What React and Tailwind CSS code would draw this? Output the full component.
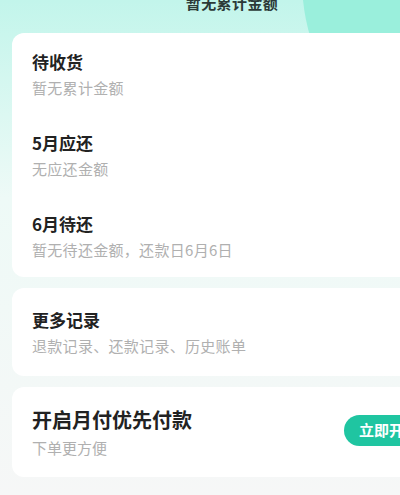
import React from 'react';

const font = { fontFamily: '"Noto Sans CJK SC", "Noto Sans", sans-serif' };

const rows = [
  { title: '待收货', sub: '暂无累计金额' },
  { title: '5月应还', sub: '无应还金额' },
  { title: '6月待还', sub: '暂无待还金额，还款日6月6日' },
];

const Row = ({ title, sub }) => (
  <div className="flex flex-col gap-1">
    <div className="text-[17px] leading-6 font-bold text-[#222]">{title}</div>
    <div className="text-[15px] leading-5 text-[#b0b0b0] tracking-[0.3px]">{sub}</div>
  </div>
);

export default function App() {
  return (
    <div
      className="relative w-[400px] h-[495px] overflow-hidden bg-gradient-to-b from-[#c2f5eb] via-[#eefaf7] via-40% to-[#f6f7f7]"
      style={font}
    >
      {/* decorative circle in the header */}
      <div className="absolute left-[302px] top-[-220px] w-[400px] h-[400px] rounded-full bg-[#9aefdc]" />

      <div className="relative h-[33px] flex justify-center">
        <div className="ml-[64px] -mt-[7px] text-[15px] leading-5 font-bold text-[#2c3a38] tracking-[0.4px]">
          暂无累计金额
        </div>
      </div>

      <div className="relative ml-3 w-[456px] flex flex-col gap-[11px]">
        <div className="bg-white rounded-xl px-5 pt-[17px] pb-[17px] flex flex-col gap-[33px]">
          {rows.map((r) => (
            <Row key={r.title} {...r} />
          ))}
        </div>

        <div className="bg-white rounded-xl px-5 pt-5 pb-5">
          <Row title="更多记录" sub="退款记录、还款记录、历史账单" />
        </div>

        <div className="bg-white rounded-xl px-5 py-[19px] flex items-center justify-between">
          <div className="flex flex-col gap-1">
            <div className="text-[20px] leading-7 font-bold text-[#222]">开启月付优先付款</div>
            <div className="text-[15px] leading-5 text-[#b0b0b0]">下单更方便</div>
          </div>
          <button className="mr-[14px] mt-[-4px] h-[31px] px-[15px] rounded-full bg-[#1fc5a1] text-white text-[15px] font-semibold whitespace-nowrap">
            立即开通
          </button>
        </div>
      </div>
    </div>
  );
}
